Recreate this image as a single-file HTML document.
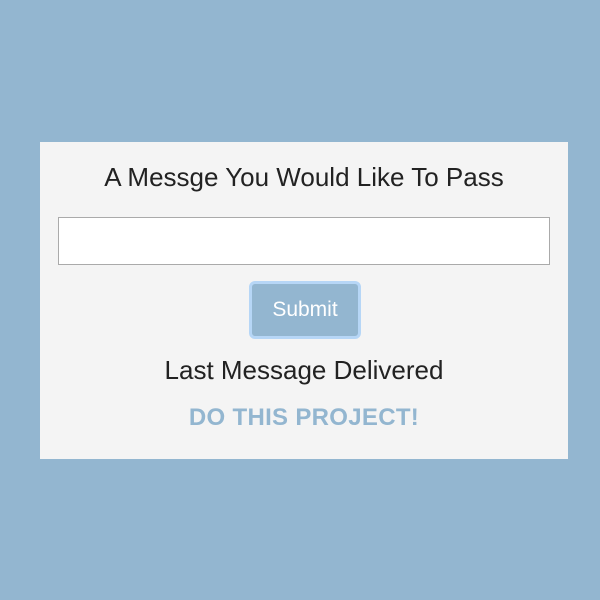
<!DOCTYPE html>
<html><head><style>
body{margin:0;width:600px;height:600px;background:#93b6d0;font-family:"Liberation Sans",sans-serif;position:relative;overflow:hidden}
.card{position:absolute;left:40px;top:142px;width:528px;height:317px;background:#f4f4f4}
.t{position:absolute;left:0;width:528px;text-align:center;color:#222;font-size:26px}
input{position:absolute;left:18px;top:75px;width:492px;height:48px;box-sizing:border-box;border:1px solid #aaa;background:#fff}
.btn{position:absolute;left:209px;top:139px;width:106px;height:52px;background:#93b6d0;border:3px solid #b6d6f6;border-radius:6px;color:#fff;font-size:21px;text-align:center;line-height:52px}
</style></head><body>
<div class="card">
<div class="t" style="top:20px">A Messge You Would Like To Pass</div>
<input type="text">
<div class="btn">Submit</div>
<div class="t" style="top:213px">Last Message Delivered</div>
<div class="t" style="top:262px;color:#93b6d0;font-weight:bold;font-size:24px;letter-spacing:0.3px">DO THIS PROJECT!</div>
</div>
</body></html>
